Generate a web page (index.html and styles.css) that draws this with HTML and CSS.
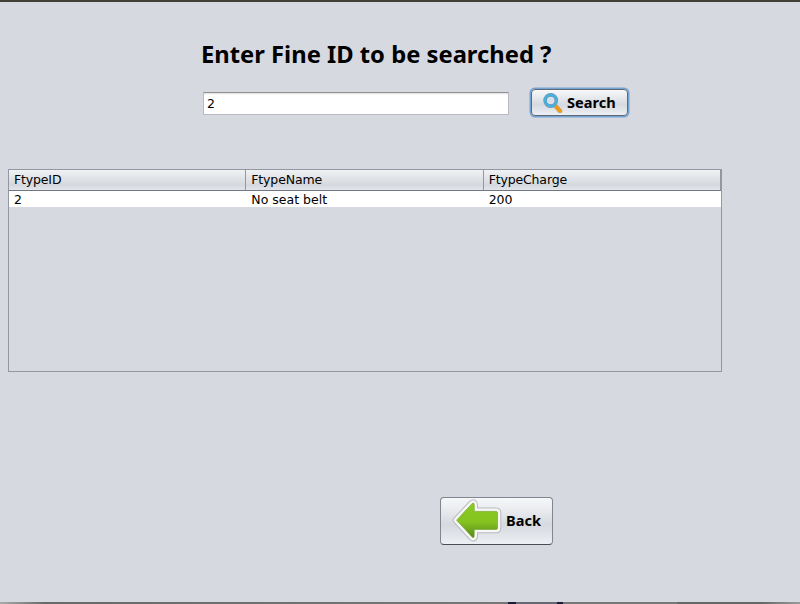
FILE: index.html
```
<!DOCTYPE html>
<html lang="en">
<head>
<meta charset="utf-8">
<title>Fine search</title>
<link rel="stylesheet" href="styles.css">
</head>
<body>
<main class="window">
  <h1 class="title"><span>Enter Fine ID to be searched ?</span></h1>
  <form class="search">
    <input class="field" type="text" value="2" aria-label="Fine ID">
    <button class="button search-button" type="button">
      <svg width="20" height="20" viewBox="0 0 20 20">
        <path d="M12.5 13 17 18" stroke="#b9a78f" stroke-width="4.6" stroke-linecap="round"/>
        <path d="M13.4 14 17 18" stroke="#ee9b12" stroke-width="3.5" stroke-linecap="round"/>
        <circle cx="7.7" cy="7.5" r="5.6" fill="#d9e0ea" stroke="#7794a4" stroke-width="3.6"/>
        <circle cx="7.7" cy="7.5" r="5.6" fill="none" stroke="#48b0df" stroke-width="2.6"/>
      </svg>
      <span>Search</span>
    </button>
  </form>
  <section class="pane">
    <table class="grid">
      <thead><tr><th>FtypeID</th><th>FtypeName</th><th>FtypeCharge</th></tr></thead>
      <tbody><tr><td>2</td><td>No seat belt</td><td>200</td></tr></tbody>
    </table>
  </section>
  <button class="button back-button" type="button">
    <svg width="50" height="44" viewBox="0 .6 50 44">
      <defs><linearGradient id="leaf" x1="0" y1="0" x2="0" y2="1"><stop offset="0" stop-color="#8aca20"/><stop offset=".55" stop-color="#85c321"/><stop offset="1" stop-color="#56871c"/></linearGradient></defs>
      <g stroke-linejoin="round">
        <path d="M4.6 21.8 20 5.300Q22.200 3.500 22.200 7V13H44Q45.500 13 45.500 14.500V29.500Q45.500 31 44 31H22.200V37Q22.200 40.500 20 38.500Z" fill="#b9babc" stroke="#b9babc" stroke-width="7.600"/>
        <path d="M4.6 21.8 20 5.300Q22.200 3.500 22.200 7V13H44Q45.500 13 45.500 14.500V29.500Q45.500 31 44 31H22.200V37Q22.200 40.500 20 38.500Z" fill="#f7f7f7" stroke="#f7f7f7" stroke-width="5.600"/>
        <path d="M4.6 21.8 20 5.300Q22.200 3.500 22.200 7V13H44Q45.500 13 45.500 14.500V29.500Q45.500 31 44 31H22.200V37Q22.200 40.500 20 38.500Z" fill="url(#leaf)" stroke="#75a829" stroke-width=".7"/>
      </g>
    </svg>
    <span>Back</span>
  </button>
  <footer class="edge"><i class="dark"></i><i class="gap"></i><i class="dark end"></i><i class="tail"></i></footer>
</main>
</body>
</html>
```
FILE: styles.css
```
* { box-sizing: border-box; }
body { margin: 0; background: #d6d9e0; color: #000; font: 13px "DejaVu Sans", sans-serif; }
.window { display: flex; flex-direction: column; height: 604px; border-top: 2px solid #404037; overflow: hidden; }
.title { margin: 34px 0 0 201px; height: 36px; font: bold 24px/35px "Noto Sans", sans-serif; white-space: nowrap; }
.title span { display: inline-block; transform-origin: 0 50%; transform: scaleX(.99); }
.search { display: flex; align-items: flex-start; margin: 16px 0 0 203px; height: 30px; }
.field { width: 306px; height: 23px; margin: 4px 22px 0 0; padding: 0 3px; border: 1px solid #b9bbc0; border-top-color: #8f9092; border-radius: 0; background: linear-gradient(#dedede, #fff 2px); color: #000; font: 12.5px "DejaVu Sans", sans-serif; outline: 0; }
.button { display: flex; align-items: center; border: 1px solid #81858d; border-bottom-color: #494d55; border-radius: 4px; background: linear-gradient(#f7f8fa 0, #e8eaee 28%, #d6d9df 58%, #e4e7ec 86%, #edf0f4 100%); color: #000; font: bold 14px "Noto Sans", sans-serif; }
.button svg { flex: none; }
.search-button { width: 97px; height: 27px; margin-top: 1px; padding: 0 0 0 11px; border-color: #606a77; box-shadow: 0 0 0 1.5px #73a4d1; gap: 4px; }
.button span { display: inline-block; transform-origin: 0 50%; transform: scaleX(1.04); }
.pane { width: 714px; height: 203px; margin: 51px 0 0 8px; border: 1px solid #9297a1; }
.grid { width: 712px; table-layout: fixed; border-collapse: separate; border-spacing: 0; }
.grid th { height: 21px; padding: 0 0 0 5px; border-right: 1px solid #9297a1; border-bottom: 1px solid #717782; background: linear-gradient(#f1f2f4 0, #dfe2e6 45%, #d5d8de 75%, #e3e6eb 100%); text-align: left; font-weight: normal; line-height: 18px; letter-spacing: -.15px; }
.grid td { height: 16px; padding: 1px 0 0 5px; background: #fff; line-height: 15px; }
.grid th, .grid td { font-size: 12.5px; }
.back-button { width: 113px; height: 48px; margin: 125px 0 0 440px; padding: 0 0 0 11px; gap: 4px; }
.back-button span { padding-bottom: 2px; }
.edge { display: flex; height: 2px; margin-top: auto; padding-left: 508px; background: linear-gradient(90deg, #aaa, #696969 45px, #777 500px, #777 677px, #666 678px, #666 760px, #999); }
.edge i { height: 2px; }
.dark { width: 8px; background: #1c1b35; }
.gap { width: 41px; background: #666873; }
.end { width: 6px; }
.tail { width: 114px; background: #777; }
```
